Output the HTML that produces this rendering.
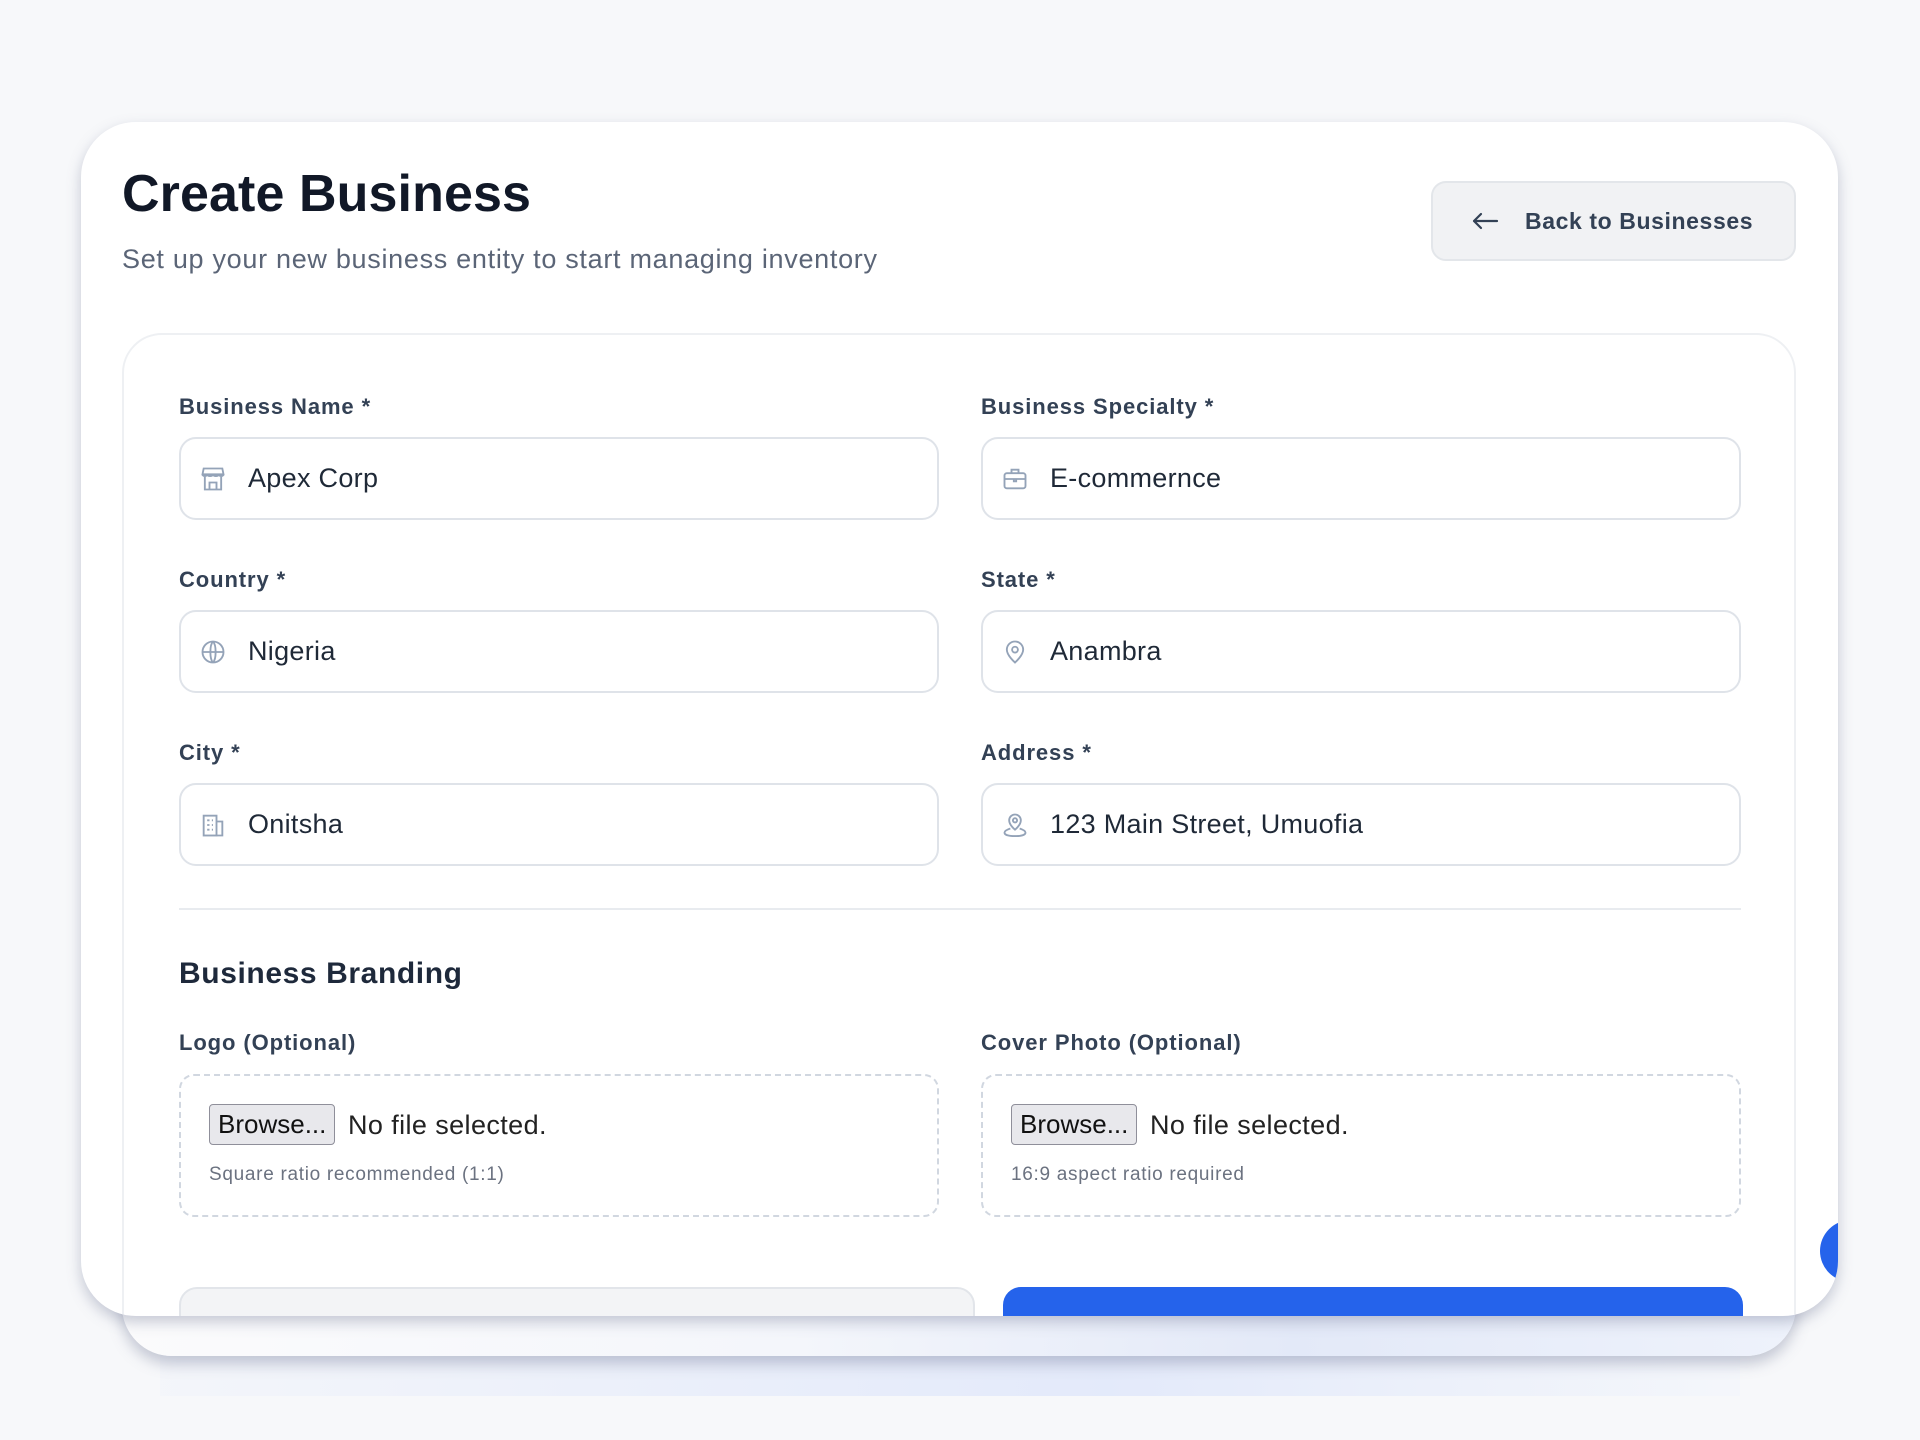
<!DOCTYPE html>
<html><head><meta charset="utf-8"><style>
*{box-sizing:border-box;margin:0;padding:0}
body{width:1920px;height:1440px;background:#f7f8fa;font-family:"Liberation Sans",sans-serif;position:relative;overflow:hidden;color:#1e293b}
.band{position:absolute;left:160px;top:1340px;width:1580px;height:56px;background:linear-gradient(90deg,rgba(240,243,250,0.5),rgba(225,232,250,0.9) 60%,rgba(240,244,252,0.4));}
.under{position:absolute;left:122px;top:1250px;width:1674px;height:106px;background:linear-gradient(90deg,#fbfbfc 0%,#f4f6fb 40%,#e3e9f8 70%,#eef2fb 100%);border-radius:0 0 50px 50px;box-shadow:0 8px 14px rgba(100,110,140,0.35)}
.card{position:absolute;left:81px;top:122px;width:1757px;height:1194px;background:#fff;border-radius:55px;overflow:hidden;box-shadow:0 6px 14px rgba(100,110,140,0.35)}
h1{position:absolute;left:41px;top:42px;font-size:52px;font-weight:600;color:#111827;letter-spacing:0.1px}
.sub{position:absolute;left:41px;top:122px;font-size:27px;color:#5b6577;letter-spacing:0.7px}
.back{position:absolute;left:1350px;top:59px;width:365px;height:80px;border:2px solid #e3e6ea;background:#f1f2f4;border-radius:15px;font-size:23px;font-weight:700;color:#334155;display:flex;align-items:center;padding-left:38px;letter-spacing:0.6px}
.back span{margin-left:26px}
.panel{position:absolute;left:41px;top:211px;width:1674px;height:1100px;border:2px solid #eef0f3;border-radius:40px}
.lbl{position:absolute;font-size:22px;font-weight:700;color:#334155;letter-spacing:0.9px}
.inp{position:absolute;width:760px;height:83px;border:2px solid #dfe3e9;border-radius:17px;display:flex;align-items:center;padding-left:18px;font-size:27px;color:#1f2937;letter-spacing:0.3px}
.inp svg{width:28px;height:28px;margin-right:21px;flex:none}
.div{position:absolute;left:98px;top:786px;width:1562px;height:2px;background:#e8ebef}
.h2{position:absolute;left:98px;top:835px;font-size:30px;font-weight:600;color:#1e293b;letter-spacing:0.6px}
.drop{position:absolute;top:952px;width:760px;height:143px;border:2.5px dashed #d1d7e0;border-radius:15px}
.br{position:absolute;left:28px;top:28px;height:41px;padding:0 8px;background:#e8e8ec;border:1.5px solid #8f8f9a;border-radius:4px;font-size:26px;color:#111;line-height:38px}
.nf{position:absolute;top:34px;font-size:27px;color:#222;letter-spacing:0.4px}
.hint{position:absolute;left:28px;top:88px;font-size:19px;color:#6b7280;letter-spacing:0.7px}
</style></head><body>
<div class="band"></div>
<div class="under"></div>
<div class="card">
<h1>Create Business</h1>
<div class="sub">Set up your new business entity to start managing inventory</div>
<div class="back"><svg width="28" height="20" viewBox="0 0 28 20"><path d="M26 10H3M10 3L3 10l7 7" fill="none" stroke="#334155" stroke-width="2.2" stroke-linecap="round" stroke-linejoin="round"/></svg><span>Back to Businesses</span></div>
<div class="panel"></div>
<div class="lbl" style="left:98px;top:272px">Business Name *</div>
<div class="lbl" style="left:900px;top:272px">Business Specialty *</div>
<div class="inp" style="left:98px;top:315px"><svg viewBox="0 0 24 24" fill="none" stroke="#94a3b8" stroke-width="1.6"><path d="M4 3h16l1 5H3z M3 8c0 2 4 2 4 0c0 2 5 2 5 0c0 2 5 2 5 0c0 2 4 2 4 0 M5 10v11h14V10 M9 21v-6h6v6"/></svg>Apex Corp</div>
<div class="inp" style="left:900px;top:315px"><svg viewBox="0 0 24 24" fill="none" stroke="#94a3b8" stroke-width="1.6"><rect x="3" y="7" width="18" height="13" rx="2"/><path d="M9 7V4h6v3M3 12h18M11 12v2h2v-2"/></svg>E-commernce</div>
<div class="lbl" style="left:98px;top:445px">Country *</div>
<div class="lbl" style="left:900px;top:445px">State *</div>
<div class="inp" style="left:98px;top:488px"><svg viewBox="0 0 24 24" fill="none" stroke="#94a3b8" stroke-width="1.6"><circle cx="12" cy="12" r="9"/><path d="M3 12h18M12 3c3 3 3 15 0 18M12 3c-3 3-3 15 0 18"/></svg>Nigeria</div>
<div class="inp" style="left:900px;top:488px"><svg viewBox="0 0 24 24" fill="none" stroke="#94a3b8" stroke-width="1.6"><path d="M12 21s-7-6-7-11a7 7 0 0114 0c0 5-7 11-7 11z"/><circle cx="12" cy="10" r="2.5"/></svg>Anambra</div>
<div class="lbl" style="left:98px;top:618px">City *</div>
<div class="lbl" style="left:900px;top:618px">Address *</div>
<div class="inp" style="left:98px;top:661px"><svg viewBox="0 0 24 24" fill="none" stroke="#94a3b8" stroke-width="1.6"><rect x="4" y="4" width="11" height="17"/><path d="M15 9h5v12h-5M7 8h2M11 8h1M7 12h2M11 12h1M7 16h2M11 16h1"/></svg>Onitsha</div>
<div class="inp" style="left:900px;top:661px"><svg viewBox="0 0 24 24" fill="none" stroke="#94a3b8" stroke-width="1.6"><path d="M12 16s-5-4-5-8a5 5 0 0110 0c0 4-5 8-5 8z"/><circle cx="12" cy="8" r="1.8"/><path d="M8 15c-3 1-5 2-5 3.5 0 2 4 3 9 3s9-1 9-3c0-1.5-2-2.5-5-3.5"/></svg>123 Main Street, Umuofia</div>
<div class="div"></div>
<div class="h2">Business Branding</div>
<div class="lbl" style="left:98px;top:908px">Logo (Optional)</div>
<div class="lbl" style="left:900px;top:908px">Cover Photo (Optional)</div>
<div class="drop" style="left:98px"><div class="br">Browse...</div><div class="nf" style="left:167px">No file selected.</div><div class="hint">Square ratio recommended (1:1)</div></div>
<div class="drop" style="left:900px"><div class="br">Browse...</div><div class="nf" style="left:167px">No file selected.</div><div class="hint">16:9 aspect ratio required</div></div>
<div style="position:absolute;left:98px;top:1165px;width:796px;height:60px;background:#f3f4f6;border:2px solid #e2e5ea;border-radius:18px"></div>
<div style="position:absolute;left:922px;top:1165px;width:740px;height:60px;background:#2563eb;border-radius:18px"></div>
<div style="position:absolute;left:1739px;top:1098px;width:62px;height:62px;background:#2563eb;border-radius:50%"></div>
</div>
</body></html>
